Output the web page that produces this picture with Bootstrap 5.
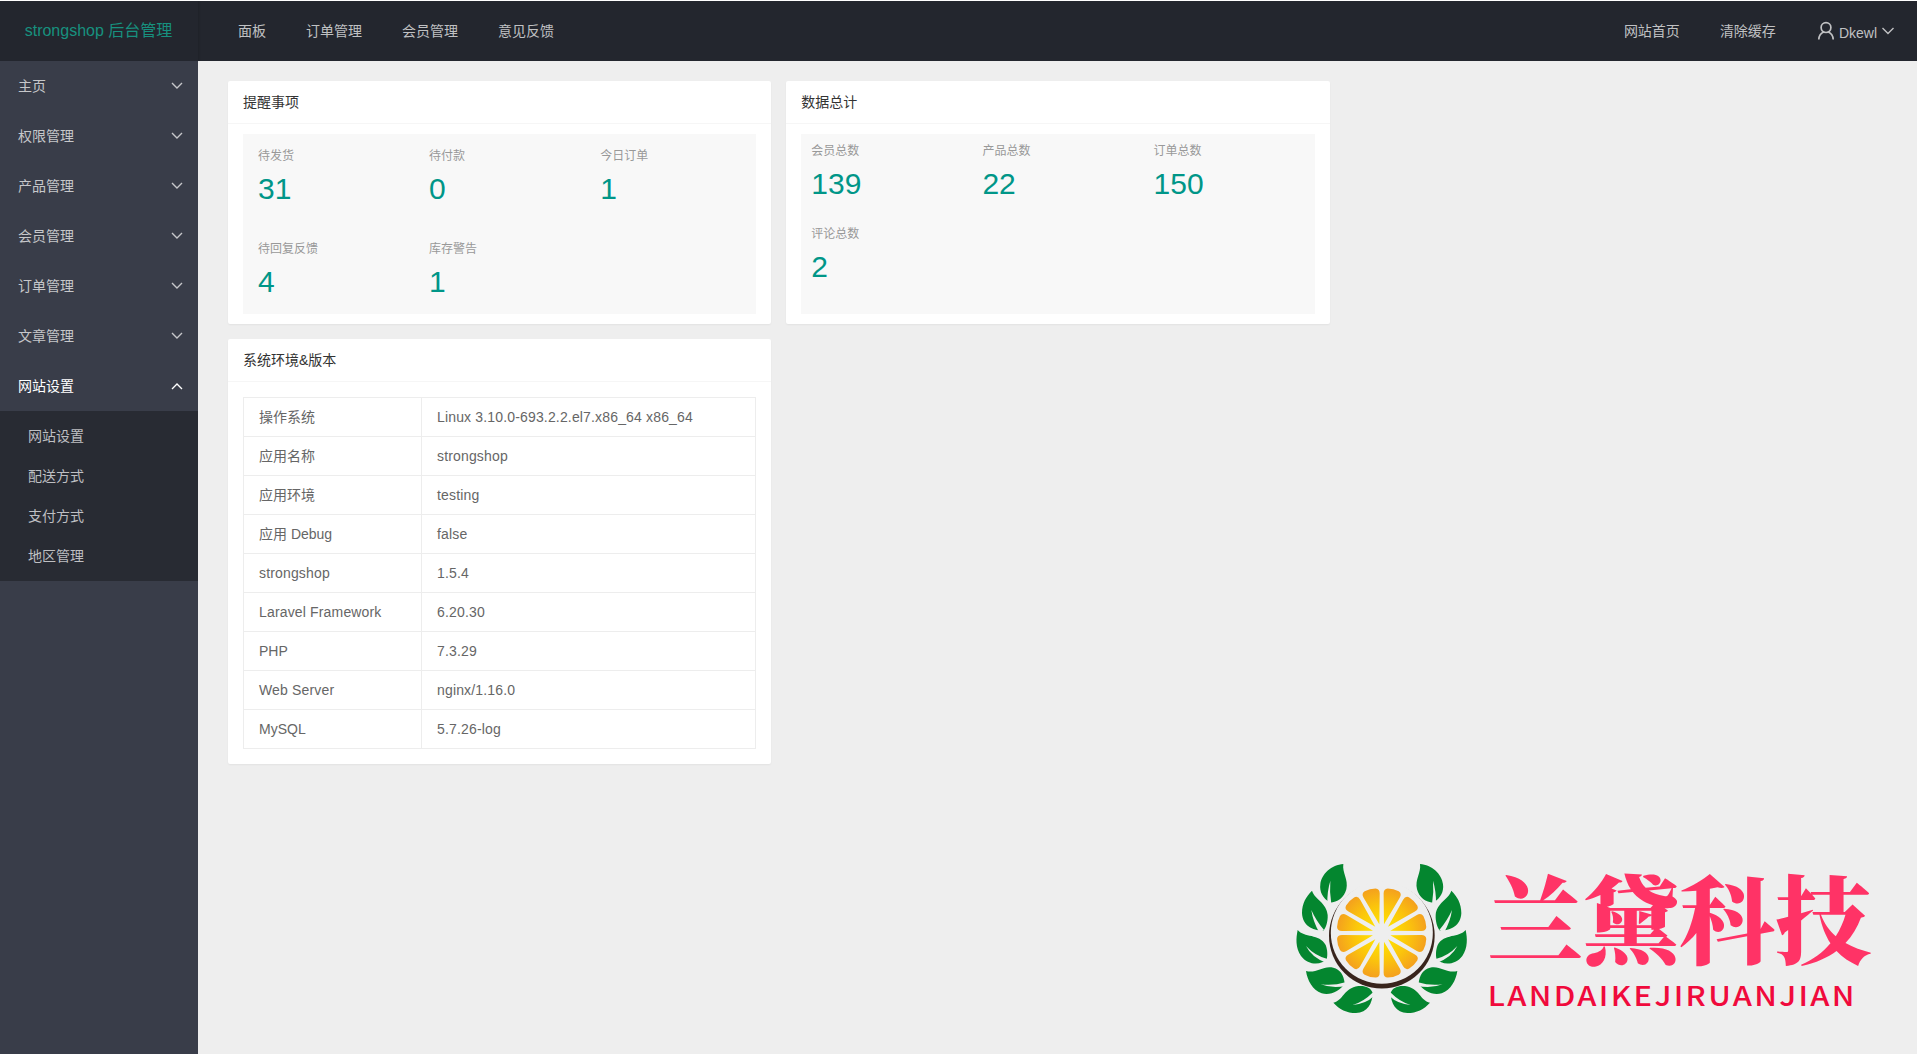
<!DOCTYPE html>
<html lang="zh-CN">
<head>
<meta charset="utf-8">
<title>strongshop 后台管理</title>
<meta name="viewport" content="width=device-width, initial-scale=1">
<link href="https://cdn.jsdelivr.net/npm/bootstrap@5.3.0/dist/css/bootstrap.min.css" rel="stylesheet">
<style>
body{font:14px/24px "Liberation Sans","Noto Sans CJK SC",sans-serif;background:#eee;color:#666;height:1054px;overflow:hidden;border-top:1px solid #fff}
a{text-decoration:none;color:inherit}
.topbar{height:60px;background:#23262e;color:#c0c1c3;padding-right:2px}
.brand{width:198px;font-size:16px;color:#17917f;box-shadow:1px 0 2px rgba(0,0,0,.15);padding-right:1px}
.topbar .nav-link{padding:0 20px;color:inherit}
.side{width:198px;background:#393d49;color:#c6c7ca}
.side-item{height:50px;padding:0 15px 0 18px}
.side-item.open{color:#fff}
.sub{background:#282b33;padding:5px 0}
.sub a{display:flex;align-items:center;height:40px;padding-left:28px;color:#bebfc2}
.chev{fill:none;stroke:currentColor;stroke-width:1.4}
.main{padding:20px 29px 20px 30px}
.main>.row{--bs-gutter-x:15px;--bs-gutter-y:15px;margin-top:-15px}
.panel{border:0;border-radius:2px;box-shadow:0 1px 2px rgba(0,0,0,.05);color:#666}
.panel-title{height:43px;line-height:42px;padding:0 15px;border-bottom:1px solid #f6f6f6;color:#333}
.stats{margin:10px 15px;height:180px;background:#f8f8f8;padding-top:16px}
.stats.tight{padding-top:11px}
.stat{height:93px;padding-left:15px}
.tight .stat{height:83px;padding-left:10px}
.stat span{display:block;font-size:12px;line-height:12px;color:#999}
.stat b{display:block;font-weight:400;font-size:30px;line-height:30px;margin-top:12px;color:#009688}
.env{margin:15px;width:513px;border-collapse:collapse;color:#666;line-height:20px}
.env td{border:1px solid #ededed;height:39px;padding:9px 15px}
.env td:first-child{width:178px}
.env .en{letter-spacing:.16px}
.watermark{position:absolute;left:1280px;top:850px;pointer-events:none;overflow:visible}
</style>
<script src="https://cdn.jsdelivr.net/npm/bootstrap@5.3.0/dist/js/bootstrap.bundle.min.js"></script>
</head>
<body class="d-flex flex-column">
<header class="topbar d-flex align-items-stretch flex-shrink-0">
  <div class="brand d-flex align-items-center justify-content-center">strongshop 后台管理</div>
  <nav class="nav align-items-center ms-3 ps-1">
    <a class="nav-link" href="#">面板</a><a class="nav-link" href="#">订单管理</a><a class="nav-link" href="#">会员管理</a><a class="nav-link" href="#">意见反馈</a>
  </nav>
  <nav class="nav align-items-center ms-auto">
    <a class="nav-link" href="#">网站首页</a><a class="nav-link" href="#">清除缓存</a>
    <a class="nav-link d-flex align-items-center" href="#">
      <svg class="me-1" style="margin-left:1px" width="18" height="20" viewBox="0 0 18 20" fill="none" stroke="currentColor" stroke-width="1.7"><circle cx="9" cy="6.6" r="4.9"/><path d="M1.8 18.5C2 14.8 4 12 6.8 11M16.2 18.5C16 14.8 14 12 11.2 11"/></svg>
      <span class="pt-1">Dkewl</span>
      <svg class="chev ms-1" width="14" height="14" viewBox="0 0 14 14"><path d="M1.500 4L7 9.500 12.500 4"/></svg>
    </a>
  </nav>
</header>
<div class="d-flex flex-grow-1">
  <aside class="side flex-shrink-0">
    <a class="side-item d-flex align-items-center justify-content-between" href="#">主页<svg class="chev" width="12" height="8" viewBox="0 0 12 8"><path d="M1 1l5 5 5-5"/></svg></a>
    <a class="side-item d-flex align-items-center justify-content-between" href="#">权限管理<svg class="chev" width="12" height="8" viewBox="0 0 12 8"><path d="M1 1l5 5 5-5"/></svg></a>
    <a class="side-item d-flex align-items-center justify-content-between" href="#">产品管理<svg class="chev" width="12" height="8" viewBox="0 0 12 8"><path d="M1 1l5 5 5-5"/></svg></a>
    <a class="side-item d-flex align-items-center justify-content-between" href="#">会员管理<svg class="chev" width="12" height="8" viewBox="0 0 12 8"><path d="M1 1l5 5 5-5"/></svg></a>
    <a class="side-item d-flex align-items-center justify-content-between" href="#">订单管理<svg class="chev" width="12" height="8" viewBox="0 0 12 8"><path d="M1 1l5 5 5-5"/></svg></a>
    <a class="side-item d-flex align-items-center justify-content-between" href="#">文章管理<svg class="chev" width="12" height="8" viewBox="0 0 12 8"><path d="M1 1l5 5 5-5"/></svg></a>
    <a class="side-item open d-flex align-items-center justify-content-between" href="#">网站设置<svg class="chev" width="12" height="8" viewBox="0 0 12 8"><path d="M1 7l5-5 5 5"/></svg></a>
    <div class="sub"><a href="#">网站设置</a><a href="#">配送方式</a><a href="#">支付方式</a><a href="#">地区管理</a></div>
  </aside>
  <main class="main flex-grow-1">
    <div class="row">
      <div class="col-4"><section class="card panel">
        <div class="panel-title">提醒事项</div>
        <div class="stats"><div class="row g-0">
          <div class="col-4 stat"><span>待发货</span><b>31</b></div>
          <div class="col-4 stat"><span>待付款</span><b>0</b></div>
          <div class="col-4 stat"><span>今日订单</span><b>1</b></div>
          <div class="col-4 stat"><span>待回复反馈</span><b>4</b></div>
          <div class="col-4 stat"><span>库存警告</span><b>1</b></div>
        </div></div>
      </section></div>
      <div class="col-4"><section class="card panel">
        <div class="panel-title">数据总计</div>
        <div class="stats tight"><div class="row g-0">
          <div class="col-4 stat"><span>会员总数</span><b>139</b></div>
          <div class="col-4 stat"><span>产品总数</span><b>22</b></div>
          <div class="col-4 stat"><span>订单总数</span><b>150</b></div>
          <div class="col-4 stat"><span>评论总数</span><b>2</b></div>
        </div></div>
      </section></div>
      <div class="w-100 m-0"></div>
      <div class="col-4"><section class="card panel">
        <div class="panel-title">系统环境&amp;版本</div>
        <table class="env">
          <tr><td>操作系统</td><td class="en">Linux 3.10.0-693.2.2.el7.x86_64 x86_64</td></tr>
          <tr><td>应用名称</td><td class="en">strongshop</td></tr>
          <tr><td>应用环境</td><td class="en">testing</td></tr>
          <tr><td>应用 Debug</td><td class="en">false</td></tr>
          <tr><td class="en">strongshop</td><td class="en">1.5.4</td></tr>
          <tr><td class="en">Laravel Framework</td><td class="en">6.20.30</td></tr>
          <tr><td>PHP</td><td class="en">7.3.29</td></tr>
          <tr><td class="en">Web Server</td><td class="en">nginx/1.16.0</td></tr>
          <tr><td>MySQL</td><td class="en">5.7.26-log</td></tr>
        </table>
      </section></div>
    </div>
  </main>
</div>
<svg class="watermark" width="610" height="175" viewBox="0 0 1830 525">
  <defs>
    <radialGradient id="juice" gradientUnits="userSpaceOnUse" cx="0" cy="0" r="136"><stop offset=".2" stop-color="#ffe100"/><stop offset=".6" stop-color="#fbc50c"/><stop offset="1" stop-color="#f4a01e"/></radialGradient>
    <path id="slice" d="M27 0L116 25Q130 29 134 17Q138 0 134-17Q130-29 116-25Z" fill="url(#juice)"/>
    <g id="leaves">
      <g fill="#04862f">
        <path d="M190 42C186 68 206 88 199 118C193 142 172 158 150 158C128 145 118 125 121 103C124 72 155 44 190 42Z"/>
        <path d="M96 122C104 148 140 158 143 195C144 215 138 233 130 242C100 243 68 228 66 190C66 160 78 140 96 122Z"/>
        <path d="M53 240C72 264 118 250 137 285C143 300 143 318 140 328C125 345 85 348 63 318C46 292 48 265 53 240Z"/>
        <path d="M78 363C108 372 130 345 160 353C180 358 192 375 194 400C180 425 150 437 125 430C97 420 82 390 78 363Z"/>
        <path d="M160 458C190 452 190 415 235 408C255 406 272 412 278 428C278 460 262 487 228 489C200 489 178 478 160 458Z"/>
      </g>
      <g fill="#eee">
        <path d="M142 162L154 162Q148 125 151 92Q141 125 142 162Z"/>
        <path d="M118 248L132 240Q108 212 94 180Q99 215 118 248Z"/>
        <path d="M138 338L145 328Q105 318 78 288Q95 322 138 338Z"/>
        <path d="M198 408L196 397Q160 408 122 403Q155 416 198 408Z"/>
        <path d="M282 438L280 426Q250 456 218 465Q257 462 282 438Z"/>
      </g>
    </g>
  </defs>
  <circle cx="305.500" cy="257" r="158.500" fill="#38241c"/>
  <circle cx="305.500" cy="248" r="153" fill="#eee"/>
  <g transform="translate(305 249)">
    <use href="#slice" transform="rotate(15)"/><use href="#slice" transform="rotate(45)"/><use href="#slice" transform="rotate(75)"/><use href="#slice" transform="rotate(105)"/><use href="#slice" transform="rotate(135)"/><use href="#slice" transform="rotate(165)"/><use href="#slice" transform="rotate(195)"/><use href="#slice" transform="rotate(225)"/><use href="#slice" transform="rotate(255)"/><use href="#slice" transform="rotate(285)"/><use href="#slice" transform="rotate(315)"/><use href="#slice" transform="rotate(345)"/>
  </g>
  <use href="#leaves"/><use href="#leaves" transform="translate(610 0) scale(-1 1)"/>
  <text x="621" y="317" textLength="1152" font-family="'Noto Serif CJK SC','Noto Sans CJK SC',serif" font-weight="900" font-size="288" fill="#ff3366">兰黛科技</text>
  <text transform="translate(623 468) scale(1.13 1)" textLength="974" font-family="'Noto Sans CJK SC',sans-serif" font-weight="500" font-size="82" fill="#f00a3c">LANDAIKEJIRUANJIAN</text>
</svg>
</body>
</html>
